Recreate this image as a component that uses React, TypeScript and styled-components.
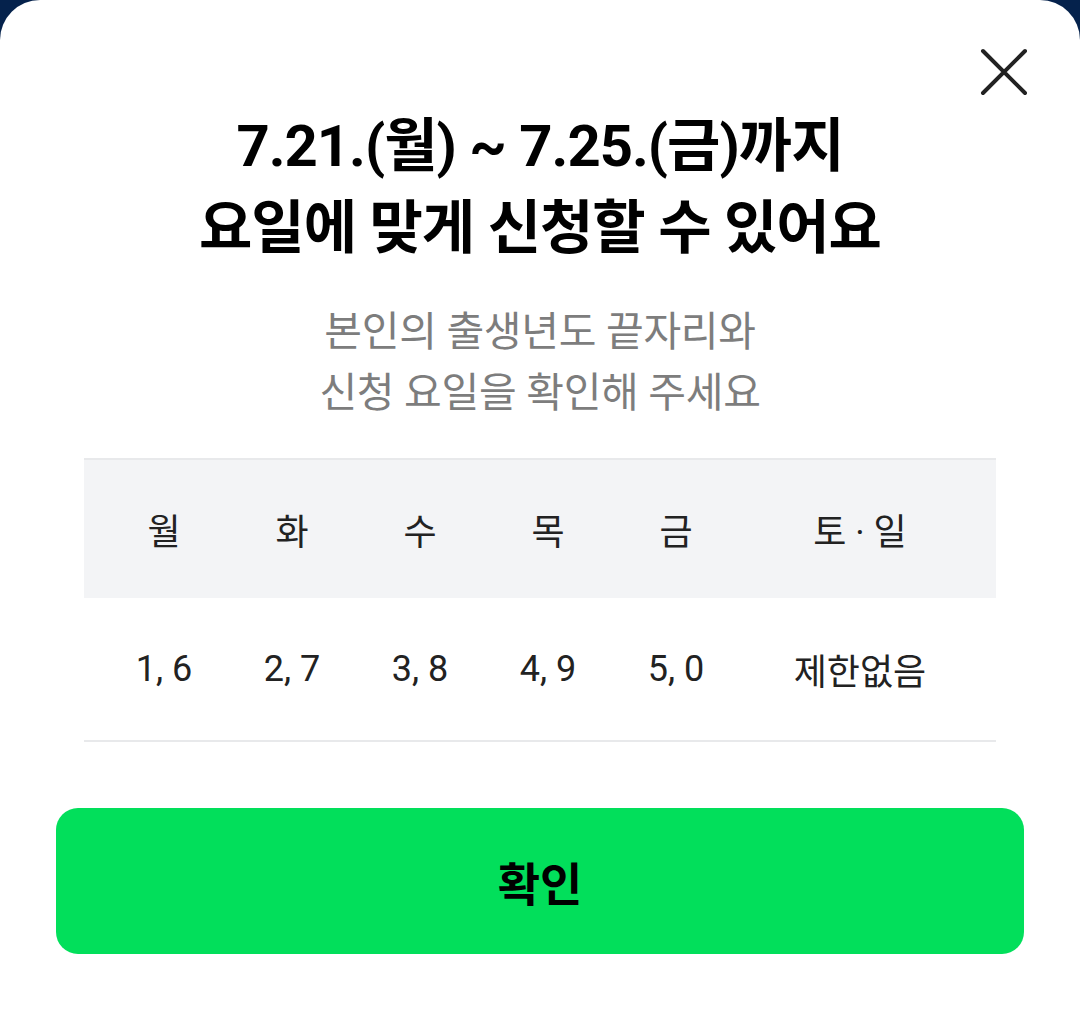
import React from 'react';
import styled, { createGlobalStyle } from 'styled-components';

const GlobalStyle = createGlobalStyle`
  html, body {
    margin: 0;
    padding: 0;
    background: #05224c;
  }
  body {
    font-family: Roboto, "Noto Sans CJK KR", sans-serif;
  }
`;

const days = [
  { day: '월', digits: '1, 6' },
  { day: '화', digits: '2, 7' },
  { day: '수', digits: '3, 8' },
  { day: '목', digits: '4, 9' },
  { day: '금', digits: '5, 0' },
  { day: '토 · 일', digits: '제한없음' },
];

function CloseIcon() {
  return (
    <svg width="48" height="48" viewBox="0 0 48 48" fill="none">
      <path d="M3 3L45 45M45 3L3 45" stroke="#222" strokeWidth="4" strokeLinecap="round" />
    </svg>
  );
}

function App() {
  return (
    <>
      <GlobalStyle />
      <Sheet>
        <TopBar>
          <CloseButton aria-label="닫기">
            <CloseIcon />
          </CloseButton>
        </TopBar>
        <Title>
          7.21.(월) ~ 7.25.(금)까지
          <br />
          요일에 맞게 신청할 수 있어요
        </Title>
        <Subtitle>
          본인의 출생년도 끝자리와
          <br />
          신청 요일을 확인해 주세요
        </Subtitle>
        <Table>
          <HeadRow>
            {days.map((d) => (
              <Cell key={d.day}>{d.day}</Cell>
            ))}
          </HeadRow>
          <BodyRow>
            {days.map((d) => (
              <Cell key={d.day}>{d.digits}</Cell>
            ))}
          </BodyRow>
        </Table>
        <ConfirmButton>확인</ConfirmButton>
      </Sheet>
    </>
  );
}

const Sheet = styled.div`
  box-sizing: border-box;
  height: 1016px;
  background: #ffffff;
  border-radius: 40px 40px 0 0;
  display: flex;
  flex-direction: column;
  padding: 0 56px;
  overflow: hidden;
`;

const TopBar = styled.div`
  display: flex;
  justify-content: flex-end;
  padding-top: 48px;
  margin-right: -4px;
`;

const CloseButton = styled.button`
  width: 48px;
  height: 48px;
  padding: 0;
  border: none;
  background: none;
  display: flex;
  align-items: center;
  justify-content: center;
`;

const Title = styled.h1`
  margin: 9px -20px 0;
  font-size: 58px;
  line-height: 82px;
  font-weight: 700;
  color: #000;
  text-align: center;
  letter-spacing: -1px;
`;

const Subtitle = styled.p`
  margin: 33px 0 0;
  font-size: 41px;
  line-height: 61px;
  font-weight: 400;
  color: #7d7d7d;
  text-align: center;
  letter-spacing: -0.3px;
`;

const Table = styled.div`
  margin: 34px 28px 0;
  border-top: 2px solid #e8e9eb;
  border-bottom: 2px solid #e8e9eb;
`;

const Row = styled.div`
  display: grid;
  grid-template-columns: repeat(5, 128px) 1fr;
  padding: 0 16px;
  align-items: center;
`;

const HeadRow = styled(Row)`
  height: 138px;
  background: #f3f4f6;
`;

const BodyRow = styled(Row)`
  height: 142px;
  background: #ffffff;
`;

const Cell = styled.div`
  text-align: center;
  font-size: 36px;
  color: #222;
`;

const ConfirmButton = styled.button`
  margin-top: 66px;
  height: 146px;
  border: none;
  border-radius: 22px;
  background: #02df5b;
  color: #000;
  font-family: Roboto, "Noto Sans CJK KR", sans-serif;
  font-size: 46px;
  font-weight: 700;
`;

export default App;
